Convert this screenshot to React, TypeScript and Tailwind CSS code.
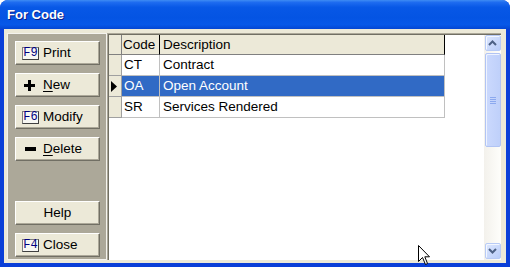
import React from 'react';

type Row = { code: string; description: string; selected?: boolean };

const rows: Row[] = [
  { code: 'CT', description: 'Contract' },
  { code: 'OA', description: 'Open Account', selected: true },
  { code: 'SR', description: 'Services Rendered' },
];

const KeyCap = ({ label }: { label: string }) => (
  <span className="flex h-[13px] w-[17px] items-center justify-center border border-t-[#808080] border-l-[#808080] border-b-[#404040] border-r-[#404040] bg-[#F7F7F3] font-['Liberation_Mono',monospace] text-[12px] leading-none text-[#000080]">
    {label}
  </span>
);

const ToolButton = ({ icon, children, center }: { icon?: React.ReactNode; children: React.ReactNode; center?: boolean }) => (
  <button
    type="button"
    className={`flex h-[24px] w-[85px] items-center border border-t-white border-l-white border-b-[#716F64] border-r-[#716F64] bg-[#ECE9D8] text-[13.5px] leading-none text-black shadow-[inset_-1px_-1px_0_#ACA899] ${center ? 'justify-center' : 'pl-[6px]'}`}
  >
    {icon && <span className="flex w-[17px] items-center justify-center">{icon}</span>}
    <span className={icon ? 'ml-[4px]' : ''}>{children}</span>
  </button>
);

const PlusIcon = () => (
  <svg width="11" height="11" viewBox="0 0 11 11" className="-ml-[3px]">
    <rect x="4" y="0" width="3" height="11" fill="#000" />
    <rect x="0" y="4" width="11" height="3" fill="#000" />
  </svg>
);

const MinusIcon = () => (
  <svg width="11" height="4" viewBox="0 0 11 4">
    <rect x="0" y="0" width="11" height="4" fill="#000" />
  </svg>
);

const ScrollButton = ({ down }: { down?: boolean }) => (
  <div className="flex h-[16px] w-[16px] items-center justify-center rounded-[2px] border border-[#B8CBF6] bg-[linear-gradient(to_bottom_right,#DDE7FE,#B9CDF9)] shadow-[inset_1px_1px_0_#F3F7FF]">
    <svg width="9" height="6" viewBox="0 0 9 6">
      <path d={down ? 'M1 1 L4.5 4.5 L8 1' : 'M1 5 L4.5 1.5 L8 5'} stroke="#4D6185" strokeWidth="2" fill="none" />
    </svg>
  </div>
);

export default function App() {
  return (
    <div className="relative h-[267px] w-[510px] bg-white font-['Liberation_Sans',Arial,sans-serif]">
      <div className="flex h-[267px] w-[510px] flex-col overflow-hidden rounded-t-[8px] bg-[#0A3FD8]">
        {/* Title bar */}
        <div className="flex h-[29px] shrink-0 items-center bg-[linear-gradient(to_bottom,#3F8CF3_0%,#1E6CF0_8%,#0858E6_25%,#0454E3_60%,#0758E8_85%,#0446D3_100%)] pl-[7px] text-[13px] font-bold text-white [text-shadow:1px_1px_#0A1E8A]">
          For Code
        </div>

        {/* Body */}
        <div className="mx-[4px] mb-[4px] flex flex-1 bg-[#ECE9D8] pb-[3px] pl-[3px] pr-[5px] pt-[4px]">
          {/* Left button panel */}
          <div className="flex w-[100px] flex-col gap-[8px] border border-[#F4F3EE] bg-[#ACA899] pb-[2px] pl-[7px] pt-[7px]">
            <ToolButton icon={<KeyCap label="F9" />}>Print</ToolButton>
            <ToolButton icon={<PlusIcon />}>
              <span className="underline underline-offset-[2px]">N</span>ew
            </ToolButton>
            <ToolButton icon={<KeyCap label="F6" />}>Modify</ToolButton>
            <ToolButton icon={<MinusIcon />}>
              <span className="underline underline-offset-[2px]">D</span>elete
            </ToolButton>
            <div className="flex-1" />
            <ToolButton center>Help</ToolButton>
            <ToolButton icon={<KeyCap label="F4" />}>Close</ToolButton>
          </div>

          {/* Grid */}
          <div className="flex flex-1 border-l border-t border-[#ACA899]">
            <div className="flex flex-1 border-l border-t border-[#716F64]">
              <div className="flex-1 bg-white text-[13.5px] leading-none text-black">
                <div className="flex h-[20px]">
                  <div className="w-[13px] border-b border-r border-b-[#808080] border-r-[#808080] bg-[#ECE9D8]" />
                  <div className="flex w-[38px] items-center border-b border-r border-b-[#808080] border-r-black bg-[#ECE9D8] pl-[1px]">Code</div>
                  <div className="flex w-[285px] items-center border-b border-r border-b-[#808080] border-r-black bg-[#ECE9D8] pl-[3px]">Description</div>
                </div>
                {rows.map((r) => (
                  <div key={r.code} className="flex h-[21px]">
                    <div className="flex w-[13px] items-center border-b border-r border-[#A0A0A0] bg-[#ECE9D8] pl-[2px]">
                      {r.selected && (
                        <svg width="6" height="11" viewBox="0 0 6 11">
                          <path d="M0 0 L6 5.5 L0 11 Z" fill="#000" />
                        </svg>
                      )}
                    </div>
                    <div className={`flex w-[38px] items-center border-b border-r border-[#C0C0C0] pl-[2px] ${r.selected ? 'bg-[#316AC5] text-white' : ''}`}>
                      {r.code}
                    </div>
                    <div className={`flex w-[285px] items-center border-b border-r border-[#C0C0C0] pl-[3px] ${r.selected ? 'bg-[#316AC5] text-white' : ''}`}>
                      {r.description}
                    </div>
                  </div>
                ))}
              </div>

              {/* Scrollbar */}
              <div className="flex w-[17px] flex-col items-center bg-[linear-gradient(to_right,#F3F1EC,#FEFEFB)] pb-[1px]">
                <ScrollButton />
                <div className="mt-[2px] flex h-[94px] w-[16px] items-center justify-center rounded-[2px] border border-[#B1C4F4] bg-[linear-gradient(to_right,#CBD9FD,#BFD0FA)] shadow-[inset_1px_1px_0_#EEF3FF]">
                  <div className="flex flex-col gap-[1px]">
                    <div className="h-[1px] w-[6px] bg-[#8CA9EF]" />
                    <div className="h-[1px] w-[6px] bg-[#8CA9EF]" />
                    <div className="h-[1px] w-[6px] bg-[#8CA9EF]" />
                    <div className="h-[1px] w-[6px] bg-[#8CA9EF]" />
                  </div>
                </div>
                <div className="flex-1" />
                <ScrollButton down />
              </div>
            </div>
          </div>
        </div>
      </div>

      {/* Mouse pointer */}
      <svg className="absolute left-[418px] top-[245px]" width="13" height="21" viewBox="0 0 13 21">
        <path d="M0.5 0.5 L0.5 16.5 L4.5 12.5 L7.5 19.5 L9.5 18.5 L6.8 11.8 L11.5 11.8 Z" fill="#fff" stroke="#000" strokeWidth="1" />
      </svg>
    </div>
  );
}
